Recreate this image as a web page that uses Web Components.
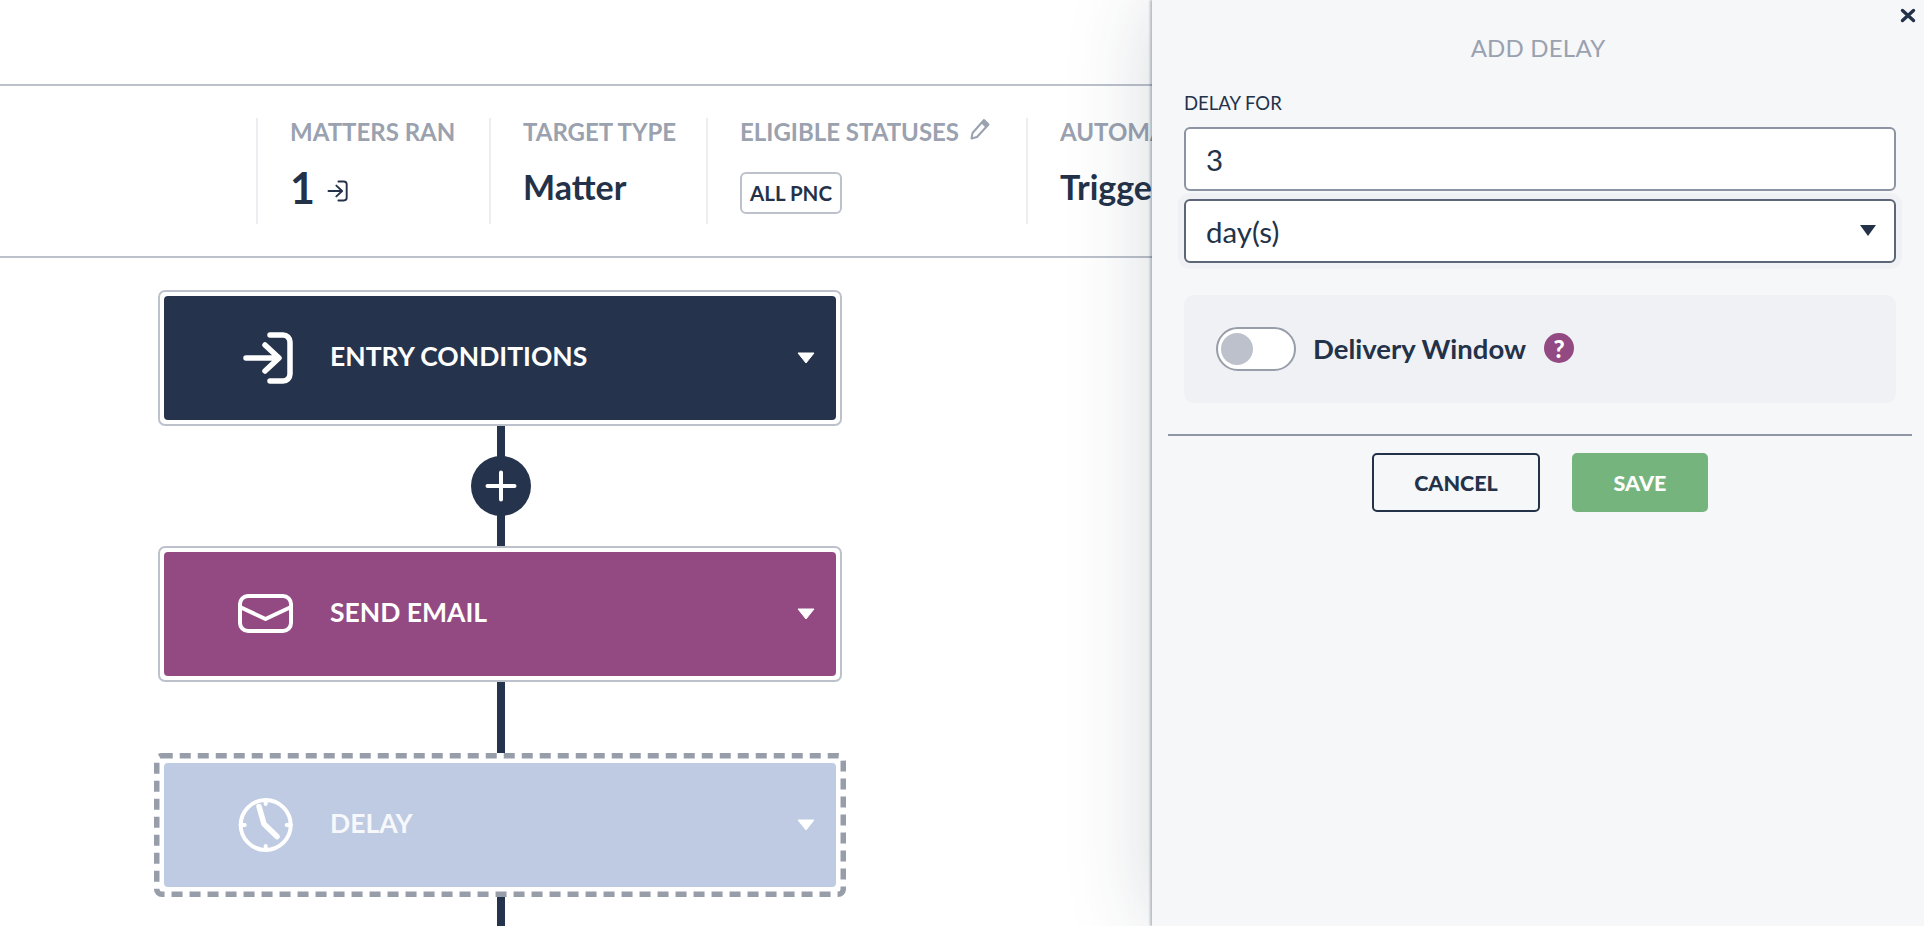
<!DOCTYPE html>
<html>
<head>
<meta charset="utf-8">
<title>Add delay</title>
<style>
  html, body { margin: 0; height: 100%; }
  body { font-family: "Lato", "Liberation Sans", sans-serif; color: #243249; background: #fff; overflow: hidden; }
</style>
</head>
<body>
<automation-page>
  <stats-bar>
    <stat-cell label="MATTERS RAN" style="width:233px"><big-count>1</big-count><entry-icon></entry-icon></stat-cell>
    <stat-cell label="TARGET TYPE" style="width:217px">Matter</stat-cell>
    <stat-cell label="ELIGIBLE STATUSES" style="width:320px" editable><status-chip>ALL PNC</status-chip></stat-cell>
    <stat-cell label="AUTOMA">Trigger</stat-cell>
  </stats-bar>
  <flow-column>
    <flow-card tone="navy" title="ENTRY CONDITIONS" icon="entry"></flow-card>
    <flow-line size="120" plus></flow-line>
    <flow-card tone="plum" title="SEND EMAIL" icon="mail"></flow-card>
    <flow-line size="71"></flow-line>
    <flow-card tone="pale" title="DELAY" icon="clock" dashed></flow-card>
    <flow-line size="40"></flow-line>
  </flow-column>
  <delay-panel></delay-panel>
</automation-page>

<script>
const ENTRY_PATHS = `<path d="M34 7H47a7 7 0 0 1 7 7V46a7 7 0 0 1-7 7H34"/><path d="M10 30H42M29 17L43 30L29 43"/>`;

const ICONS = {
  entry: `<svg viewBox="0 0 60 60" fill="none" stroke="#fff" stroke-width="5.5" stroke-linecap="round" stroke-linejoin="round">${ENTRY_PATHS}</svg>`,
  mail: `<svg viewBox="0 0 60 60" fill="none" stroke="#fff" stroke-width="4" stroke-linecap="round" stroke-linejoin="round"><rect x="4" y="12" width="51" height="35" rx="8"/><path d="M4 23L29.5 35L55 23"/></svg>`,
  clock: `<svg viewBox="0 0 60 60" fill="none" stroke="#fff" stroke-width="4" stroke-linecap="round" stroke-linejoin="round"><circle cx="29.7" cy="30" r="25"/><path d="M29.7 5V9M29.7 51V55M4.7 30H8.7M50.7 30H54.7"/><path d="M23 11.5L28 29L41 41.5" stroke-width="5.5"/></svg>`
};

class AutomationPage extends HTMLElement {
  constructor() {
    super();
    this.attachShadow({mode: "open"}).innerHTML = `
      <style>
        :host { display: block; position: relative; width: 1924px; height: 926px; overflow: hidden; padding-top: 84px; box-sizing: border-box; }
      </style>
      <slot></slot>`;
  }
}

class StatsBar extends HTMLElement {
  constructor() {
    super();
    this.attachShadow({mode: "open"}).innerHTML = `
      <style>
        :host { display: flex; height: 174px; box-sizing: border-box; padding: 32px 0 32px 256px; border-top: 2px solid #bcc1cb; border-bottom: 2px solid #bcc1cb; }
      </style>
      <slot></slot>`;
  }
}

class StatCell extends HTMLElement {
  constructor() {
    super();
    const pencil = this.hasAttribute("editable") ? `<svg class="pencil" viewBox="0 0 20 22" fill="none" stroke="#9aa1af" stroke-width="2" stroke-linejoin="round"><path d="M14 2L18.5 6.5L7 19L1.5 20.5L2.5 15Z"/><path d="M12.5 4L17 8.5" stroke-width="3.5"/></svg>` : "";
    this.attachShadow({mode: "open"}).innerHTML = `
      <style>
        :host { display: block; flex: none; box-sizing: border-box; padding: 0 0 0 32px; border-left: 2px solid #eceef1; white-space: nowrap; }
        .label { display: flex; align-items: flex-start; height: 42px; font-size: 24px; line-height: 28px; font-weight: 700; color: #9aa1af; }
        .pencil { width: 20px; height: 22px; margin: 0 0 0 11px; }
        .value { display: flex; align-items: center; height: 52px; font-size: 34px; font-weight: 700; color: #243249; }
      </style>
      <div class="label">${this.getAttribute("label")}${pencil}</div>
      <div class="value"><slot></slot></div>`;
  }
}

class BigCount extends HTMLElement {
  constructor() {
    super();
    this.attachShadow({mode: "open"}).innerHTML = `
      <style>
        :host { display: block; font-size: 43px; line-height: 52px; font-weight: 700; margin-top: 3px; }
      </style>
      <slot></slot>`;
  }
}

class EntryIcon extends HTMLElement {
  constructor() {
    super();
    this.attachShadow({mode: "open"}).innerHTML = `
      <style>
        :host { display: block; width: 24px; height: 24px; margin: 9px 0 0 11px; }
        svg { display: block; width: 24px; height: 24px; }
      </style>
      <svg viewBox="4 1 58 58" fill="none" stroke="#243249" stroke-width="4.6" stroke-linecap="round" stroke-linejoin="round">${ENTRY_PATHS}</svg>`;
  }
}

class StatusChip extends HTMLElement {
  constructor() {
    super();
    this.attachShadow({mode: "open"}).innerHTML = `
      <style>
        :host { display: block; height: 42px; width: 102px; box-sizing: border-box; margin: 14px 0 0 0; border: 2px solid #bcc1cb; border-radius: 6px; font-size: 20.5px; font-weight: 700; line-height: 38px; text-align: center; }
      </style>
      <slot></slot>`;
  }
}

class FlowColumn extends HTMLElement {
  constructor() {
    super();
    this.attachShadow({mode: "open"}).innerHTML = `
      <style>
        :host { display: flex; flex-direction: column; align-items: center; width: 692px; margin: 32px 0 0 154px; }
      </style>
      <slot></slot>`;
  }
}

class FlowCard extends HTMLElement {
  constructor() {
    super();
    const tone = this.getAttribute("tone");
    const dashed = this.hasAttribute("dashed");
    this.attachShadow({mode: "open"}).innerHTML = `
      <style>
        :host { display: block; box-sizing: border-box; position: relative; flex: none; }
        :host([dashed]) { width: 692px; height: 144px; padding: 10px; }
        :host(:not([dashed])) { width: 684px; height: 136px; padding: 4px; border: 2px solid #bcc1cb; border-radius: 7px; background: #fff; }
        .inner { display: flex; align-items: center; width: 672px; height: 124px; padding: 0 21px 0 72px; box-sizing: border-box; border-radius: 4px; color: #fff; font-size: 26.5px; font-weight: 700; background: var(--tone); }
        .navy { --tone: #25344c; }
        .plum { --tone: #934a82; }
        .pale { --tone: #bfcbe2; }
        .pale .title { color: rgba(255,255,255,.88); }
        svg.ico { display: block; width: 60px; height: 60px; flex: none; }
        .title { margin: -4px 0 0 34px; }
        .caret { margin-left: auto; width: 18px; height: 12px; }
        .dash { position: absolute; left: 0; top: 0; width: 692px; height: 144px; pointer-events: none; }
      </style>
      ${dashed ? `<svg class="dash" viewBox="0 0 692 144" fill="none"><rect x="2.75" y="2.75" width="686.5" height="138.5" rx="5" stroke="#979da9" stroke-width="5.5" stroke-dasharray="11 7"/></svg>` : ""}
      <div class="inner ${tone}">
        ${ICONS[this.getAttribute("icon")].replace("<svg", `<svg class="ico"`)}
        <span class="title">${this.getAttribute("title")}</span>
        <svg class="caret" viewBox="0 0 18 12"><path d="M1 1H17L9 11Z" fill="#fff" stroke="#fff" stroke-linejoin="round"/></svg>
      </div>`;
    this.removeAttribute("title");
  }
}

class FlowLine extends HTMLElement {
  constructor() {
    super();
    const plus = this.hasAttribute("plus") ? `
      <svg class="plus" viewBox="0 0 60 60"><circle cx="30" cy="30" r="30" fill="#25344c"/><path d="M30 16.5V43.5M16.5 30H43.5" stroke="#fff" stroke-width="4" stroke-linecap="round"/></svg>` : "";
    this.attachShadow({mode: "open"}).innerHTML = `
      <style>
        :host { display: flex; flex-direction: column; justify-content: center; align-items: center; flex: none; position: relative; width: 60px; height: ${this.getAttribute("size")}px; margin-left: 2px; z-index: 0; }
        .line { position: absolute; top: 0; bottom: 0; left: 26px; width: 8px; background: #25344c; }
        .plus { position: relative; display: block; width: 60px; height: 60px; }
      </style>
      <div class="line"></div>${plus}`;
  }
}

class DelayPanel extends HTMLElement {
  constructor() {
    super();
    this.attachShadow({mode: "open"}).innerHTML = `
      <style>
        :host { position: absolute; top: 0; right: 0; bottom: 0; width: 772px; box-sizing: border-box; background: #f6f7f9; box-shadow: -2px 0 2px rgba(36,50,73,.28), 0 0 80px rgba(36,50,73,.18); color: #243249; }
        .close { position: absolute; top: 1px; right: 7px; width: 18px; height: 24px; }
        .close svg { display: block; width: 18px; height: 24px; }
        h2 { margin: 0; padding-top: 33px; height: 61px; box-sizing: content-box; font-size: 24px; line-height: 30px; font-weight: 400; text-align: center; color: #9aa1af; letter-spacing: .2px; }
        .body { padding: 0 28px 0 32px; }
        label { display: block; font-size: 18.5px; line-height: 22px; margin-top: -2px; height: 35px; }
        .field { display: flex; align-items: center; justify-content: space-between; width: 712px; height: 64px; box-sizing: border-box; padding: 0 20px; background: #fff; border: 2px solid #8c94a4; border-radius: 6px; font-size: 29.5px; }
        .select { margin-top: 8px; border-color: #5d6678; box-shadow: 0 0 0 6px #eff1f4; }
        .caret { width: 16px; height: 11px; margin: -2px -2px 0 0; }
        .window { display: flex; align-items: center; width: 712px; height: 108px; box-sizing: border-box; margin-top: 32px; padding: 0 32px; background: #eff1f4; border-radius: 10px; }
        .toggle { width: 80px; height: 44px; box-sizing: border-box; flex: none; border: 2px solid #979da9; border-radius: 22px; background: #fff; padding: 4px 3px; }
        .toggle i { display: block; width: 32px; height: 32px; border-radius: 50%; background: #bcc1cb; }
        .wlabel { margin: -2px 0 0 17px; font-size: 27.5px; font-weight: 700; }
        .help { display: flex; align-items: center; justify-content: center; width: 30px; height: 30px; margin: -2px 0 0 18px; border-radius: 50%; background: #934a82; color: #fff; font-size: 24px; font-weight: 900; }
        hr { margin: 31px 12px 0 16px; border: 0; height: 2px; background: #8f96a5; }
        .actions { display: flex; justify-content: center; gap: 32px; padding-top: 17px; margin-left: 8px; margin-right: 4px; }
        .btn { display: flex; align-items: center; justify-content: center; height: 59px; box-sizing: border-box; border-radius: 5px; font-size: 21.5px; font-weight: 900; }
        .cancel { width: 168px; border: 2px solid #243249; color: #243249; background: transparent; }
        .save { width: 136px; background: #76b47e; color: #fff; }
      </style>
      <div class="close"><svg viewBox="0 0 18 24" fill="none" stroke="#243249" stroke-width="3.4" stroke-linecap="round"><path d="M3.5 9.5L14.5 19.5M14.5 9.5L3.5 19.5"/></svg></div>
      <h2>ADD DELAY</h2>
      <div class="body">
        <label>DELAY FOR</label>
        <div class="field">3</div>
        <div class="field select">day(s)<svg class="caret" viewBox="0 0 16 11"><path d="M0 0H16L8 11Z" fill="#243249"/></svg></div>
        <div class="window">
          <div class="toggle"><i></i></div>
          <span class="wlabel">Delivery Window</span>
          <span class="help">?</span>
        </div>
      </div>
      <hr>
      <div class="actions">
        <div class="btn cancel">CANCEL</div>
        <div class="btn save">SAVE</div>
      </div>`;
  }
}

customElements.define("automation-page", AutomationPage);
customElements.define("stats-bar", StatsBar);
customElements.define("stat-cell", StatCell);
customElements.define("big-count", BigCount);
customElements.define("entry-icon", EntryIcon);
customElements.define("status-chip", StatusChip);
customElements.define("flow-column", FlowColumn);
customElements.define("flow-card", FlowCard);
customElements.define("flow-line", FlowLine);
customElements.define("delay-panel", DelayPanel);
</script>
</body>
</html>
